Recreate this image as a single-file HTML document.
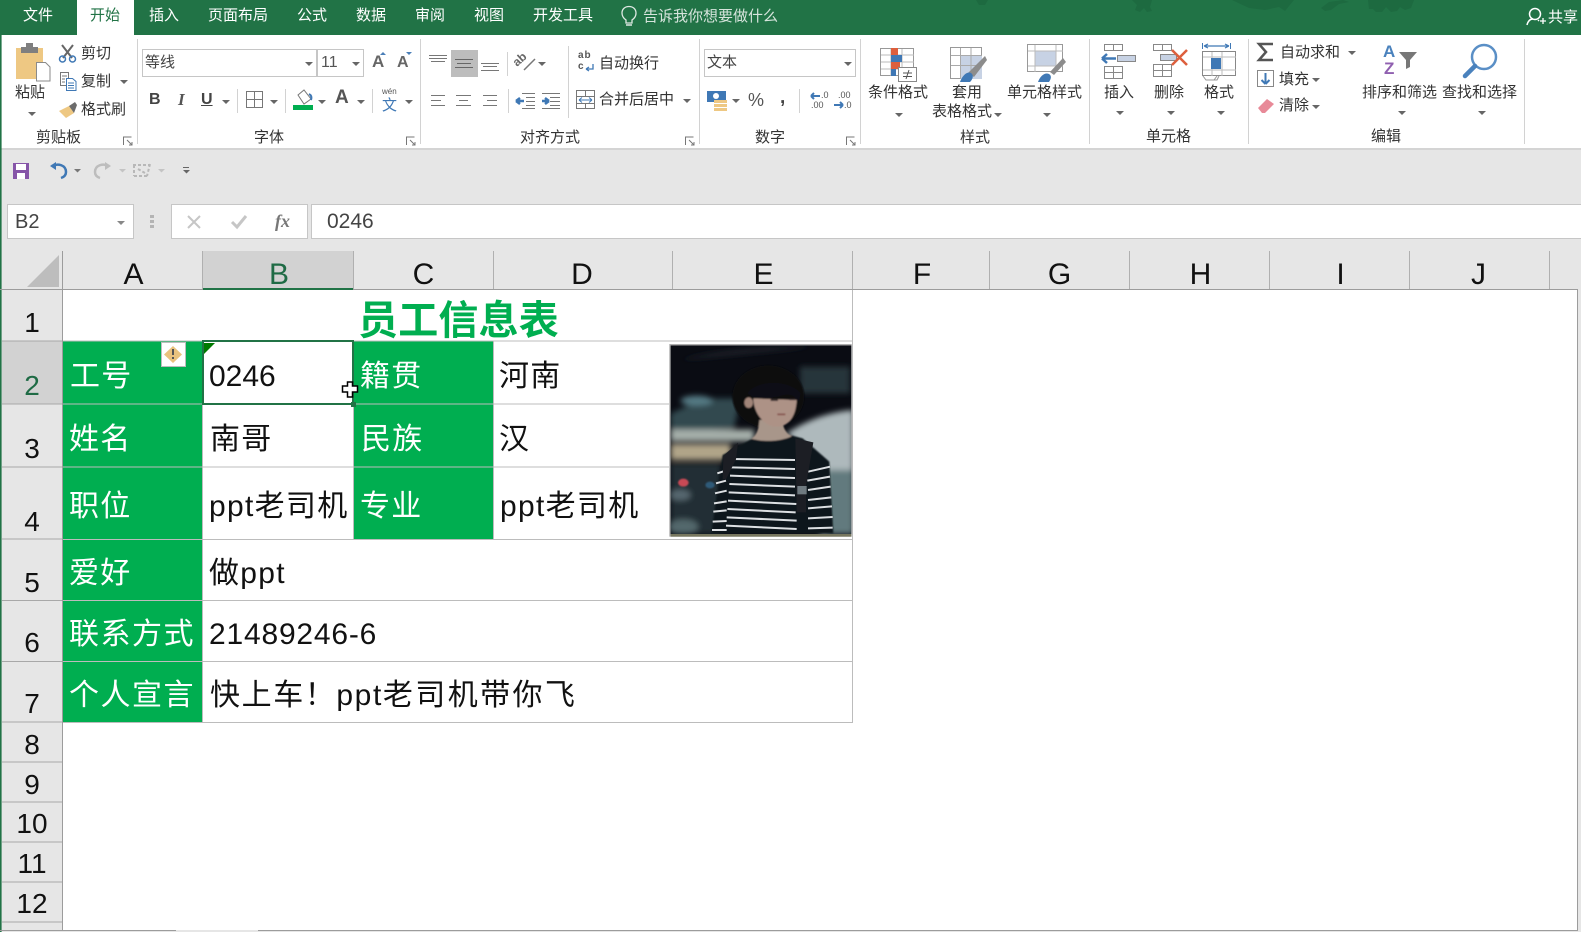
<!DOCTYPE html>
<html lang="zh-CN"><head><meta charset="utf-8"><title>Excel</title>
<style>
html,body{margin:0;padding:0;width:1581px;height:932px;overflow:hidden;background:#e6e6e6}
body{position:relative;font-family:"Liberation Sans","Noto Sans CJK SC",sans-serif}
div{position:absolute}
.t{position:absolute;white-space:nowrap;font-size:15px;line-height:20px;color:#333}
.w{color:#fff}
.g{position:absolute;white-space:nowrap;font-size:30px;line-height:40px;color:#111;letter-spacing:1.3px}
.gw{color:#fff}
.r{position:absolute;left:2px;width:60px;text-align:center;font-size:28px;line-height:36px;color:#111}
.h{position:absolute;top:256px;text-align:center;font-size:30px;line-height:38px;color:#111}
svg{position:absolute;left:0;top:0}
</style></head><body>
<!-- title bar -->
<div style="left:0;top:0;width:1581px;height:35px;background:#217346"></div>
<div style="left:77px;top:0;width:57px;height:36px;background:#fff"></div>
<!-- ribbon -->
<div style="left:0;top:35px;width:1581px;height:113px;background:#fff"></div>
<div style="left:0;top:148px;width:1581px;height:2px;background:#d4d4d4"></div>
<!-- formula boxes -->
<div style="left:7px;top:204px;width:125px;height:33px;background:#fff;border:1px solid #c6c6c6"></div>
<div style="left:171px;top:204px;width:135px;height:33px;background:#fff;border:1px solid #c6c6c6"></div>
<div style="left:311px;top:204px;width:1270px;height:33px;background:#fff;border:1px solid #c6c6c6;border-right:0"></div>
<!-- sheet -->
<div style="left:63px;top:290px;width:1514px;height:640px;background:#fff"></div>
<div style="left:203px;top:251px;width:150px;height:39px;background:#d2d2d2"></div>
<div style="left:2px;top:341px;width:60px;height:63px;background:#d2d2d2"></div>
<div style="left:63px;top:341px;width:139px;height:381px;background:#00ae50"></div>
<div style="left:353px;top:341px;width:140px;height:198px;background:#00ae50"></div>

<svg width="1581" height="932" viewBox="0 0 1581 932" fill="none">
<!-- frogs -->
<g fill="#1d6a40"><path d="M1132 0h20l-2 7 2 4-5 1-3-4-4 4-5-2 2-5z"/><path d="M1232 0h62l-5 6-4 5-6-4-14 3-16-2z"/><path d="M1321 8l8-6 14-2 6 2-10 2-8 6-6 1z"/><path d="M1368 0h46l-3 8-6 2-5-3-3 4-6 1-5-5-4 5-6 0-3-3-4 0z"/><path d="M976 0h12l-3 5h-6z"/></g>
<!-- left edge -->
<rect x="0" y="35" width="1.6" height="897" fill="#217346"/>
<!-- ribbon separators -->
<g stroke="#d2d2d2"><path d="M137.500 39v105M420.500 39v105M699.500 39v105M860.500 39v105M1089.500 39v105M1248.500 39v105M1524.500 39v105M237.500 89v24M285.500 89v24M372.500 89v24M507.500 52v24M508.500 89v24M568.500 46v72M799.500 89v24"/></g>
<!-- launchers -->
<g stroke="#777"><path d="M123.500 145v-8h8M127 140l5 5M129 145h3v-3M406.500 145v-8h8M410 140l5 5M412 145h3v-3M685.500 145v-8h8M689 140l5 5M691 145h3v-3M846.500 145v-8h8M850 140l5 5M852 145h3v-3"/></g>
<!-- carets -->
<g fill="#666"><path d="M28 112h8l-4 4zM120 80h8l-4 4zM222 100h8l-4 4zM270 100h8l-4 4zM318 100h8l-4 4zM357 100h8l-4 4zM405 100h8l-4 4zM538 62h8l-4 4zM683 99h8l-4 4zM732 99h8l-4 4zM895 113h8l-4 4zM994 113h8l-4 4zM1043 113h8l-4 4zM1116 111h8l-4 4zM1167 111h8l-4 4zM1217 111h8l-4 4zM1348 51h8l-4 4zM1312 78h8l-4 4zM1312 105h8l-4 4zM1398 111h8l-4 4zM1478 111h8l-4 4z"/></g>
<!-- clipboard -->
<rect x="16" y="48" width="27" height="31" fill="#eec883"/><rect x="21" y="47" width="17" height="6" fill="#7f7f7f"/><rect x="26" y="43" width="7" height="6" fill="#7f7f7f"/><path d="M36.500 62.500h9l4.500 4.500v14h-13.500z" fill="#fff" stroke="#8a8a8a"/>
<!-- scissors -->
<path d="M62 45l10 13M73 45l-10 13" stroke="#666" stroke-width="2"/><circle cx="62.500" cy="59" r="3" stroke="#3f78b5" stroke-width="1.500"/><circle cx="72.500" cy="59" r="3" stroke="#3f78b5" stroke-width="1.500"/>
<!-- copy -->
<path d="M60.500 72.500h8v13h-8z" fill="#fff" stroke="#777"/><path d="M66.500 78.500h6l3.500 3v9h-9.500z" fill="#fff" stroke="#3f78b5"/><path d="M62 76h5M62 79h3M62 82h3" stroke="#777"/><path d="M68 83h6M68 85.500h6M68 88h6" stroke="#3f78b5"/>
<!-- brush -->
<path d="M59 111l10-5 5 7-8 5z" fill="#eec883"/><path d="M69 106l6-4 2 3-3 8z" fill="#6b6b6b"/>
<!-- font boxes -->
<rect x="142.500" y="49.500" width="174" height="27" fill="#fff" stroke="#c6c6c6"/><rect x="317.500" y="49.500" width="46" height="27" fill="#fff" stroke="#c6c6c6"/>
<path d="M305 62h8l-4 4zM352 62h8l-4 4z" fill="#666"/>
<path d="M380 55l3-3 3 3z" fill="#4a7fb8"/><path d="M406 52l3 3 3-3z" fill="#4a7fb8"/>
<!-- border icon -->
<rect x="246.500" y="91.500" width="16" height="16" stroke="#777"/><path d="M254.500 92v15M247 99.500h15" stroke="#777"/>
<!-- fill icon -->
<path d="M298 95l6-5 7 9-7 5z" fill="#fff" stroke="#777"/><path d="M309 94c2 1 3 3 2 6" stroke="#3f78b5" stroke-width="2"/><rect x="293" y="105" width="20" height="5" fill="#00ae50"/>
<!-- align -->
<g stroke="#777"><path d="M429 55.500h18M429 58.500h18M431 61.500h14"/></g>
<rect x="451" y="50" width="27" height="27" fill="#bdbdbd"/>
<g stroke="#666"><path d="M455 59.500h18M457 63.500h14M455 67.500h18"/></g>
<g stroke="#777"><path d="M481 63.500h18M483 66.500h14M481 70.500h18M431 95.500h14M431 100.500h10M431 105.500h14M456 95.500h15M459 100.500h9M456 105.500h15M483 95.500h14M487 100.500h10M483 105.500h14"/></g>
<!-- orient -->
<text x="0" y="0" transform="translate(517 67) rotate(-42)" font-size="12" font-weight="700" fill="#666" font-family="Liberation Sans">ab</text>
<path d="M524 70l11-11" stroke="#777" stroke-width="1.500"/>
<!-- indent -->
<g stroke="#777"><path d="M522 93.500h13M526 97.500h9M526 101.500h9M526 105.500h9M522 108.500h13M542 93.500h18M550 97.500h10M550 101.500h10M550 105.500h10M542 108.500h18"/></g>
<path d="M524 101h-8M516 101l4-3M516 101l4 3M542 101h7M549 101l-4-3M549 101l-4 3" stroke="#3f78b5" stroke-width="2.500"/>
<!-- wrap -->
<path d="M586 69h7v-5M586 69l3-2M586 69l3 2" stroke="#3f78b5" stroke-width="1.300"/>
<!-- merge -->
<rect x="576.500" y="90.500" width="18" height="18" fill="#fff" stroke="#777"/><path d="M577 96.500h17M577 103.500h17M585.500 90v6M585.500 103v6" stroke="#777"/><path d="M579 100h13M579 100l3-2.500M579 100l3 2.500M592 100l-3-2.500M592 100l-3 2.500" stroke="#3f78b5"/>
<!-- number box -->
<rect x="704.500" y="49.500" width="151" height="27" fill="#fff" stroke="#c6c6c6"/><path d="M844 62h8l-4 4z" fill="#666"/>
<!-- currency -->
<rect x="707" y="91" width="19" height="11" fill="#3f78b5"/><circle cx="716" cy="96" r="3" fill="#fff"/><g fill="#eec883"><rect x="714" y="100" width="13" height="3"/><rect x="714" y="104" width="13" height="3"/><rect x="714" y="108" width="13" height="3"/></g>
<!-- decimals -->
<path d="M820 96h-9M811 96l3-3M811 96l3 3M834 105h9M843 105l-3-3M843 105l-3 3" stroke="#3f78b5" stroke-width="2"/>
<!-- cond format -->
<rect x="880.500" y="48.500" width="33" height="27" fill="#fff" stroke="#999"/><path d="M891 49v27M902 49v27M881 55h33M881 62h33M881 69h33" stroke="#bbb"/>
<rect x="891" y="48" width="7" height="7" fill="#dd5f3d"/><rect x="891" y="55" width="11" height="7" fill="#3f78b5"/><rect x="891" y="62" width="9" height="7" fill="#dd5f3d"/><rect x="891" y="69" width="5" height="7" fill="#3f78b5"/>
<rect x="898.500" y="67.500" width="18" height="14" fill="#fff" stroke="#888"/><path d="M903 73h9M903 76.500h9M909 70l-3 9" stroke="#555"/>
<!-- table style -->
<rect x="950.500" y="47.500" width="31" height="31" fill="#fff" stroke="#999"/><rect x="960" y="55" width="22" height="24" fill="#c7d2e4"/><path d="M960.500 48v31M971 48v31M951 55.500h31M951 65.500h31" stroke="#aaa"/><path d="M968 73l17-17 2 4-13 17z" fill="#8c8c8c"/><path d="M960 82c2-6 7-11 11-9 3 2 2 6-1 9z" fill="#3f78b5"/>
<!-- cell style -->
<rect x="1027.500" y="44.500" width="35" height="27" fill="#fff" stroke="#999"/><rect x="1035" y="51" width="21" height="15" fill="#c7d2e4"/><path d="M1035 45v27M1056 45v27M1028 51h35M1028 66h35" stroke="#bbb"/><path d="M1050 72l13-14 3 4-12 13z" fill="#8c8c8c"/><path d="M1038 82c2-6 7-10 11-8 3 2 2 5 0 8z" fill="#3f78b5"/>
<!-- insert -->
<g stroke="#888" fill="#fff"><rect x="1104.500" y="44.500" width="18" height="6"/><rect x="1104.500" y="66.500" width="18" height="12"/></g><path d="M1113.500 45v6M1113.500 67v12M1105 72.500h18" stroke="#888"/><rect x="1117.500" y="55.500" width="18" height="6" fill="#c7d2e4" stroke="#888"/>
<path d="M1116 58.500h-14M1102 58.500l5-4.500M1102 58.500l5 4.500" stroke="#3f78b5" stroke-width="2.500"/>
<!-- delete -->
<g stroke="#888" fill="#fff"><rect x="1153.500" y="44.500" width="18" height="6"/><rect x="1153.500" y="64.500" width="18" height="12"/></g><path d="M1162.500 45v6M1162.500 65v12M1154 70.500h18" stroke="#888"/><rect x="1160.500" y="54.500" width="16" height="6" fill="#c7d2e4" stroke="#888"/>
<path d="M1172 50l15 15M1187 50l-15 15" stroke="#dd5f3d" stroke-width="2.500"/>
<!-- format -->
<path d="M1202.500 43v6M1230.500 43v6" stroke="#3f78b5"/><path d="M1204 46h25M1204 46l4-2M1204 46l4 2M1229 46l-4-2M1229 46l-4 2" stroke="#3f78b5" stroke-width="1.200"/>
<rect x="1202.500" y="51.500" width="33" height="24" fill="#fff" stroke="#888"/><path d="M1212 52v24M1222 52v24M1203 57h33M1203 70h33" stroke="#bbb"/><rect x="1211" y="58" width="10" height="11" fill="#3f78b5"/><path d="M1203 76l3 4h8l3-4M1219 76l-2 4h-3" stroke="#999"/>
<!-- sigma -->
<path d="M1273 44h-14l7 8-7 8h14" stroke="#555" stroke-width="2.500"/>
<!-- fill down -->
<rect x="1257.500" y="70.500" width="16" height="16" fill="#fff" stroke="#888"/><path d="M1265.500 73v10M1265.500 84l-4-4M1265.500 84l4-4" stroke="#3f78b5" stroke-width="2"/>
<!-- eraser -->
<path d="M1258 108l9-9 7 5-9 9h-3z" fill="#e88a98"/>
<!-- sort funnel -->
<path d="M1417 52h-18l7 8v9l4-2v-7z" fill="#777"/>
<!-- magnifier -->
<circle cx="1484" cy="57" r="12" stroke="#5a8fc6" stroke-width="2.500"/><path d="M1475 66l-10 10" stroke="#4a82bd" stroke-width="4.500" stroke-linecap="round"/>
<!-- QAT -->
<g transform="translate(0,-2)">
<path d="M13 165h16v16H13z" fill="#8655a8"/><rect x="16" y="166" width="10" height="6" fill="#fff"/><rect x="17" y="175" width="8" height="6" fill="#fff"/>
<path d="M52 168c6-3 14-1 14 6 0 3-2 5-5 6" stroke="#3f78b5" stroke-width="2.500"/><path d="M50 168l6-4v8z" fill="#3f78b5"/>
<path d="M74 171h7l-3.500 3.500z" fill="#777"/>
<path d="M109 168c-6-3-14-1-14 6 0 3 2 5 5 6" stroke="#bdbdbd" stroke-width="2.500"/><path d="M111 168l-6-4v8z" fill="#bdbdbd"/>
<path d="M119 171h7l-3.500 3.500z" fill="#c4c4c4"/>
<path d="M133 167h17M134 178h13M134 167v11M150 166l-3 12M138 171l7 4" stroke="#b8b8b8" stroke-width="2" stroke-dasharray="3 2"/>
<path d="M158 171h7l-3.500 3.500z" fill="#c4c4c4"/>
<path d="M183 169.500h6" stroke="#666"/><path d="M183 172h7l-3.500 3.500z" fill="#666"/>
</g>
<!-- Formula bar -->
<path d="M117 221h8l-4 4z" fill="#888"/>
<g fill="#b4b4b4"><rect x="150" y="215" width="4" height="3"/><rect x="150" y="220" width="4" height="3"/><rect x="150" y="225" width="4" height="3"/></g>
<path d="M188 216l12 12M200 216l-12 12" stroke="#c6c6c6" stroke-width="2"/>
<path d="M232 222l5 5 9-11" stroke="#c6c6c6" stroke-width="3"/>
<!-- header separators -->
<g stroke="#b0b0b0"><path d="M202.500 251v39M353.500 251v39M493.500 251v39M672.500 251v39M852.500 251v39M989.500 251v39M1129.500 251v39M1269.500 251v39M1409.500 251v39M1549.500 251v39"/></g>
<path d="M27 287l32-32v32z" fill="#bdbdbd"/>
<path d="M0 289.500h1578" stroke="#9c9c9c"/>
<rect x="62" y="251" width="1" height="680" fill="#9c9c9c"/>
<rect x="203" y="288" width="150" height="2" fill="#217346"/>
<path d="M1577.500 290v641M0 930.500h176M258 930.500h1320" stroke="#9c9c9c"/>
<!-- row header separators -->
<g stroke="#a8a8a8"><path d="M2 341h60M2 404h60M2 467h60M2 539h60M2 600.500h60M2 661.500h60M2 722h60M2 762h60M2 802h60M2 842h60M2 882h60M2 922h60"/></g>
<!-- table lines -->
<g stroke="#bcbcbc"><path d="M63 341h789M63 404h606M63 467h606M63 539.500h789M63 600.500h789M63 661.500h789M63 722.500h789M852.500 290v433M202.500 341v381M353.500 341v198M493.500 341v198"/></g>
<!-- photo -->
<svg x="640" y="330" width="220" height="220" viewBox="0 0 660 660">
<defs><clipPath id="ph"><rect x="92" y="46" width="542" height="566"/></clipPath><filter id="b1"><feGaussianBlur stdDeviation="9"/></filter><filter id="b2"><feGaussianBlur stdDeviation="2.500"/></filter></defs>
<rect x="88" y="42" width="547" height="578" fill="#aaa"/>
<rect x="92" y="46" width="542" height="566" fill="#0a0c13"/>
<rect x="92" y="612" width="542" height="8" fill="#77775f"/>
<g clip-path="url(#ph)">
<g filter="url(#b1)">
<path d="M120 90c120-30 260-40 400-40l-300 30z" fill="#23282e"/>
<path d="M92 250l100-45 110 0-20 90-190 10z" fill="#33484f"/>
<ellipse cx="170" cy="212" rx="48" ry="15" fill="#557a84"/>
<path d="M480 110h150v80h-150z" fill="#25343b"/>
<path d="M92 298h250v36h-250z" fill="#a4aea9"/>
<path d="M92 342h180v48h-180z" fill="#b0a488"/>
<path d="M92 400h150v212h-150z" fill="#232e35"/>
<ellipse cx="120" cy="495" rx="32" ry="16" fill="#566870"/>
<ellipse cx="130" cy="590" rx="45" ry="22" fill="#53686c"/>
<path d="M440 310c60-40 130-65 200-70v372h-100l0-220z" fill="#aeb9bc"/>
<path d="M560 420h80v192h-80z" fill="#627a7e"/>
</g>
<g filter="url(#b2)">
<ellipse cx="130" cy="458" rx="16" ry="12" fill="#c84a55"/>
<ellipse cx="210" cy="465" rx="14" ry="10" fill="#2e5a78"/>
<path d="M330 330l-82 45-34 235h366l-12-215-80-70-40-10-100 8z" fill="#10121a"/>
<ellipse cx="385" cy="200" rx="108" ry="94" fill="#090a10"/>
<path d="M358 270c-2 30-8 45-24 56 30 10 90 10 122-8-22-10-28-30-28-50z" fill="#a8968a"/>
<path d="M340 205c0 40 30 85 70 85 35 0 58-30 60-80z" fill="#ad9286"/>
<ellipse cx="326" cy="218" rx="13" ry="16" fill="#a08478"/>
<path d="M322 190c30-42 125-42 160 0l-6 26c-10-20-25-26-50-20-35 10-60 10-86 6z" fill="#0c0d14"/>
<path d="M392 210h22M448 208h18" stroke="#2a2224" stroke-width="5"/>
<path d="M412 253h24" stroke="#84504a" stroke-width="5"/>
</g>
<g stroke="#dcdfe2" stroke-width="6"><path d="M275 387l190 3M272 412l193 5M270 437l195 7M268 462l197 8M266 487l199 9M264 512l205 10M262 537l205 10M260 562l210 10M258 587l212 10M232 430l25-8M228 460l30-8M225 490l35-8M222 520l38-6M220 545l40-4M218 575l42-2M216 600l44 0M504 425l66-15M502 452l68-12M504 480l68-10M504 510l70-8M504 535l72-6M504 565l74-4M504 595l74-2"/></g>
<path d="M466 325l54 12-22 130v80h-28z" fill="#1c1e24"/>
<path d="M250 378l44-40-6 50-30 60h-10z" fill="#1c1e24"/>
<rect x="472" y="468" width="28" height="25" fill="#6f7a80"/>
</g>
<rect x="90" y="44" width="544" height="2" fill="#b8b8b8"/>
</svg>
<!-- selection -->
<rect x="203" y="341" width="150" height="63" fill="#fff" stroke="#217346" stroke-width="2"/>
<rect x="351" y="402" width="5" height="5" fill="#217346"/>
<path d="M204 343h11l-11 11z" fill="#007a00"/>
<!-- warn tag -->
<rect x="161.500" y="342.500" width="24" height="24" fill="#fff" stroke="#bdbdbd"/><path d="M173 346l9 8.500-9 8.500-9-8.500z" fill="#e9c27e"/><path d="M172 349h2v6h-2zM172 357h2v2h-2z" fill="#555"/>
<!-- cursor -->
<path d="M348 382h5v4h5v6h-5v5h-5v-5h-5v-6h5z" transform="translate(-.5 0)" fill="#fff" stroke="#000" stroke-width="1.500"/>
<!-- person -->
<circle cx="1535" cy="14" r="5.500" stroke="#fff" stroke-width="1.500"/><path d="M1527 25c1-4 3-6 6-6M1538 20l1 1" stroke="#fff" stroke-width="1.500"/><path d="M1540 21h6M1543 18v6" stroke="#fff" stroke-width="1.300"/>
<!-- bulb -->
<path d="M626 20c-3-2-4-5-4-7 0-4 3-6.500 7-6.500s7 2.500 7 6.500c0 2-1 5-4 7v3h-6z" stroke="#dfe9e3" stroke-width="1.300"/><path d="M626 25h6" stroke="#dfe9e3" stroke-width="1.500"/>
</svg>

<!-- tabs -->
<span class="t w" style="left:23px;top:6px">文件</span>
<span class="t" style="left:90px;top:6px;color:#217346">开始</span>
<span class="t w" style="left:149px;top:6px">插入</span>
<span class="t w" style="left:208px;top:6px">页面布局</span>
<span class="t w" style="left:297px;top:6px">公式</span>
<span class="t w" style="left:356px;top:6px">数据</span>
<span class="t w" style="left:415px;top:6px">审阅</span>
<span class="t w" style="left:474px;top:6px">视图</span>
<span class="t w" style="left:533px;top:6px">开发工具</span>
<span class="t" style="left:643px;top:7px;color:#d6e4dc">告诉我你想要做什么</span>
<span class="t w" style="left:1548px;top:8px">共享</span>
<!-- clipboard group -->
<span class="t" style="left:15px;top:83px">粘贴</span>
<span class="t" style="left:81px;top:44px">剪切</span>
<span class="t" style="left:81px;top:72px">复制</span>
<span class="t" style="left:81px;top:100px">格式刷</span>
<span class="t" style="left:36px;top:128px">剪贴板</span>
<!-- font group -->
<span class="t" style="left:145px;top:53px;color:#444">等线</span>
<span class="t" style="left:321px;top:53px;color:#555;font-size:16px">11</span>
<span class="t" style="left:372px;top:52px;color:#666;font-size:17px;font-weight:700">A</span>
<span class="t" style="left:397px;top:53px;color:#666;font-size:16px;font-weight:700">A</span>
<span class="t" style="left:149px;top:90px;color:#444;font-weight:700;font-size:16px">B</span>
<span class="t" style="left:178px;top:90px;color:#555;font-style:italic;font-weight:700;font-family:'Liberation Serif',serif;font-size:17px">I</span>
<span class="t" style="left:201px;top:90px;color:#444;font-weight:700;font-size:16px;text-decoration:underline">U</span>
<span class="t" style="left:335px;top:88px;color:#555;font-weight:700;font-size:19px">A</span>
<span class="t" style="left:382px;top:87px;color:#555;font-size:8px;line-height:10px">wén</span>
<span class="t" style="left:382px;top:96px;color:#3f78b5;font-size:15px">文</span>
<span class="t" style="left:254px;top:128px">字体</span>
<!-- alignment -->
<span class="t" style="left:578px;top:51px;color:#555;font-size:10px;line-height:10px;font-weight:700;letter-spacing:1px">ab</span>
<span class="t" style="left:578px;top:62px;color:#555;font-size:10px;line-height:10px;font-weight:700">c</span>
<span class="t" style="left:599px;top:54px">自动换行</span>
<span class="t" style="left:599px;top:90px">合并后居中</span>
<span class="t" style="left:520px;top:128px">对齐方式</span>
<!-- number -->
<span class="t" style="left:707px;top:53px;color:#444">文本</span>
<span class="t" style="left:748px;top:90px;color:#555;font-size:18px">%</span>
<span class="t" style="left:780px;top:88px;color:#444;font-size:19px;font-weight:700">,</span>
<span class="t" style="left:821px;top:90px;color:#555;font-size:9px;line-height:10px">.0</span>
<span class="t" style="left:811px;top:100px;color:#555;font-size:9px;line-height:10px">.00</span>
<span class="t" style="left:838px;top:90px;color:#555;font-size:9px;line-height:10px">.00</span>
<span class="t" style="left:844px;top:100px;color:#555;font-size:9px;line-height:10px">.0</span>
<span class="t" style="left:755px;top:128px">数字</span>
<!-- styles -->
<span class="t" style="left:868px;top:83px">条件格式</span>
<span class="t" style="left:952px;top:83px">套用</span>
<span class="t" style="left:932px;top:102px">表格格式</span>
<span class="t" style="left:1007px;top:83px">单元格样式</span>
<span class="t" style="left:960px;top:128px">样式</span>
<!-- cells -->
<span class="t" style="left:1104px;top:83px">插入</span>
<span class="t" style="left:1154px;top:83px">删除</span>
<span class="t" style="left:1204px;top:83px">格式</span>
<span class="t" style="left:1146px;top:127px">单元格</span>
<!-- editing -->
<span class="t" style="left:1280px;top:43px">自动求和</span>
<span class="t" style="left:1279px;top:70px">填充</span>
<span class="t" style="left:1279px;top:96px">清除</span>
<span class="t" style="left:1383px;top:42px;color:#4a82bd;font-size:17px;font-weight:700">A</span>
<span class="t" style="left:1384px;top:59px;color:#9060b0;font-size:17px;font-weight:700">Z</span>
<span class="t" style="left:1362px;top:83px">排序和筛选</span>
<span class="t" style="left:1442px;top:83px">查找和选择</span>
<span class="t" style="left:1371px;top:127px">编辑</span>
<!-- formula bar -->
<span class="t" style="left:15px;top:210px;font-size:20px;line-height:24px;color:#444">B2</span>
<span class="t" style="left:275px;top:209px;font-size:18px;line-height:24px;color:#777;font-family:'Liberation Serif',serif;font-style:italic;font-weight:700">fx</span>
<span class="t" style="left:327px;top:210px;font-size:21px;line-height:24px;color:#444">0246</span>
<!-- col headers -->
<span class="h" style="left:64px;width:139px">A</span>
<span class="h" style="left:204px;width:150px;color:#1f6b45">B</span>
<span class="h" style="left:354px;width:139px">C</span>
<span class="h" style="left:493px;width:178px">D</span>
<span class="h" style="left:674px;width:179px">E</span>
<span class="h" style="left:854px;width:136px">F</span>
<span class="h" style="left:990px;width:139px">G</span>
<span class="h" style="left:1131px;width:139px">H</span>
<span class="h" style="left:1271px;width:139px">I</span>
<span class="h" style="left:1409px;width:139px">J</span>
<!-- row headers -->
<span class="r" style="top:305px">1</span>
<span class="r" style="top:368px;color:#1f6b45">2</span>
<span class="r" style="top:431px">3</span>
<span class="r" style="top:504px">4</span>
<span class="r" style="top:565px">5</span>
<span class="r" style="top:625px">6</span>
<span class="r" style="top:686px">7</span>
<span class="r" style="top:727px">8</span>
<span class="r" style="top:767px">9</span>
<span class="r" style="top:806px">10</span>
<span class="r" style="top:846px">11</span>
<span class="r" style="top:886px">12</span>
<!-- title -->
<span class="g" style="left:358px;top:298px;font-size:40px;line-height:46px;font-weight:700;color:#00ae50;letter-spacing:.2px">员工信息表</span>
<!-- cells text -->
<span class="g gw" style="left:70px;top:357px">工号</span>
<span class="g" style="left:209px;top:357px;letter-spacing:0">0246</span>
<span class="g gw" style="left:360px;top:357px">籍贯</span>
<span class="g" style="left:499px;top:357px">河南</span>
<span class="g gw" style="left:69px;top:420px">姓名</span>
<span class="g" style="left:210px;top:420px">南哥</span>
<span class="g gw" style="left:361px;top:420px">民族</span>
<span class="g" style="left:499px;top:420px">汉</span>
<span class="g gw" style="left:69px;top:487px">职位</span>
<span class="g" style="left:209px;top:487px">ppt老司机</span>
<span class="g gw" style="left:360px;top:487px">专业</span>
<span class="g" style="left:500px;top:487px">ppt老司机</span>
<span class="g gw" style="left:69px;top:554px">爱好</span>
<span class="g" style="left:209px;top:554px">做ppt</span>
<span class="g gw" style="left:69px;top:615px;letter-spacing:1.500px">联系方式</span>
<span class="g" style="left:209px;top:615px;letter-spacing:.8px">21489246-6</span>
<span class="g gw" style="left:69px;top:676px;letter-spacing:1.500px">个人宣言</span>
<span class="g" style="left:210px;top:676px;letter-spacing:1.600px">快上车！ppt<span style="letter-spacing:2.400px">老司机带你飞</span></span>
</body></html>
